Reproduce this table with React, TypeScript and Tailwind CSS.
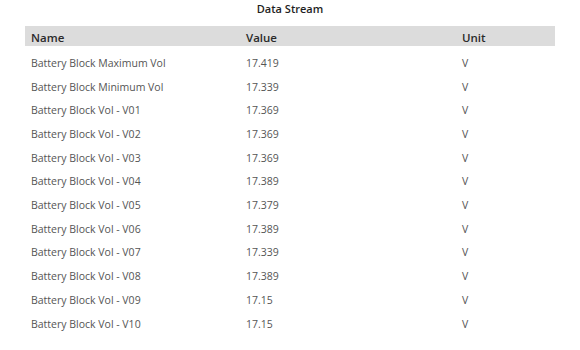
const rows: [string, string][] = [
  ["Battery Block Maximum Vol", "17.419"],
  ["Battery Block Minimum Vol", "17.339"],
  ["Battery Block Vol - V01", "17.369"],
  ["Battery Block Vol - V02", "17.369"],
  ["Battery Block Vol - V03", "17.369"],
  ["Battery Block Vol - V04", "17.389"],
  ["Battery Block Vol - V05", "17.379"],
  ["Battery Block Vol - V06", "17.389"],
  ["Battery Block Vol - V07", "17.339"],
  ["Battery Block Vol - V08", "17.389"],
  ["Battery Block Vol - V09", "17.15"],
  ["Battery Block Vol - V10", "17.15"],
];

export default function App() {
  return (
    <div className="w-[580px] h-[350px] bg-white font-['Open_Sans',sans-serif] overflow-hidden">
      <h1 className="text-center text-[11px] font-semibold text-[#1e1e1e] leading-4 pt-[1px] h-[26px]">Data Stream</h1>
      <div className="mx-[25px]">
        <div className="grid grid-cols-[215px_216px_1fr] bg-[#dcdcdc] h-[20px] items-center pt-[3px] px-[6px] text-[11.5px] font-semibold text-[#2a2a2a]">
          <span>Name</span>
          <span>Value</span>
          <span>Unit</span>
        </div>
        <div className="pt-[6px]">
          {rows.map(([name, value]) => (
            <div
              key={name}
              className="grid grid-cols-[215px_216px_1fr] h-[23.7px] items-center px-[6px] text-[10.5px] text-[#555]"
            >
              <span>{name}</span>
              <span>{value}</span>
              <span>V</span>
            </div>
          ))}
        </div>
      </div>
    </div>
  );
}
